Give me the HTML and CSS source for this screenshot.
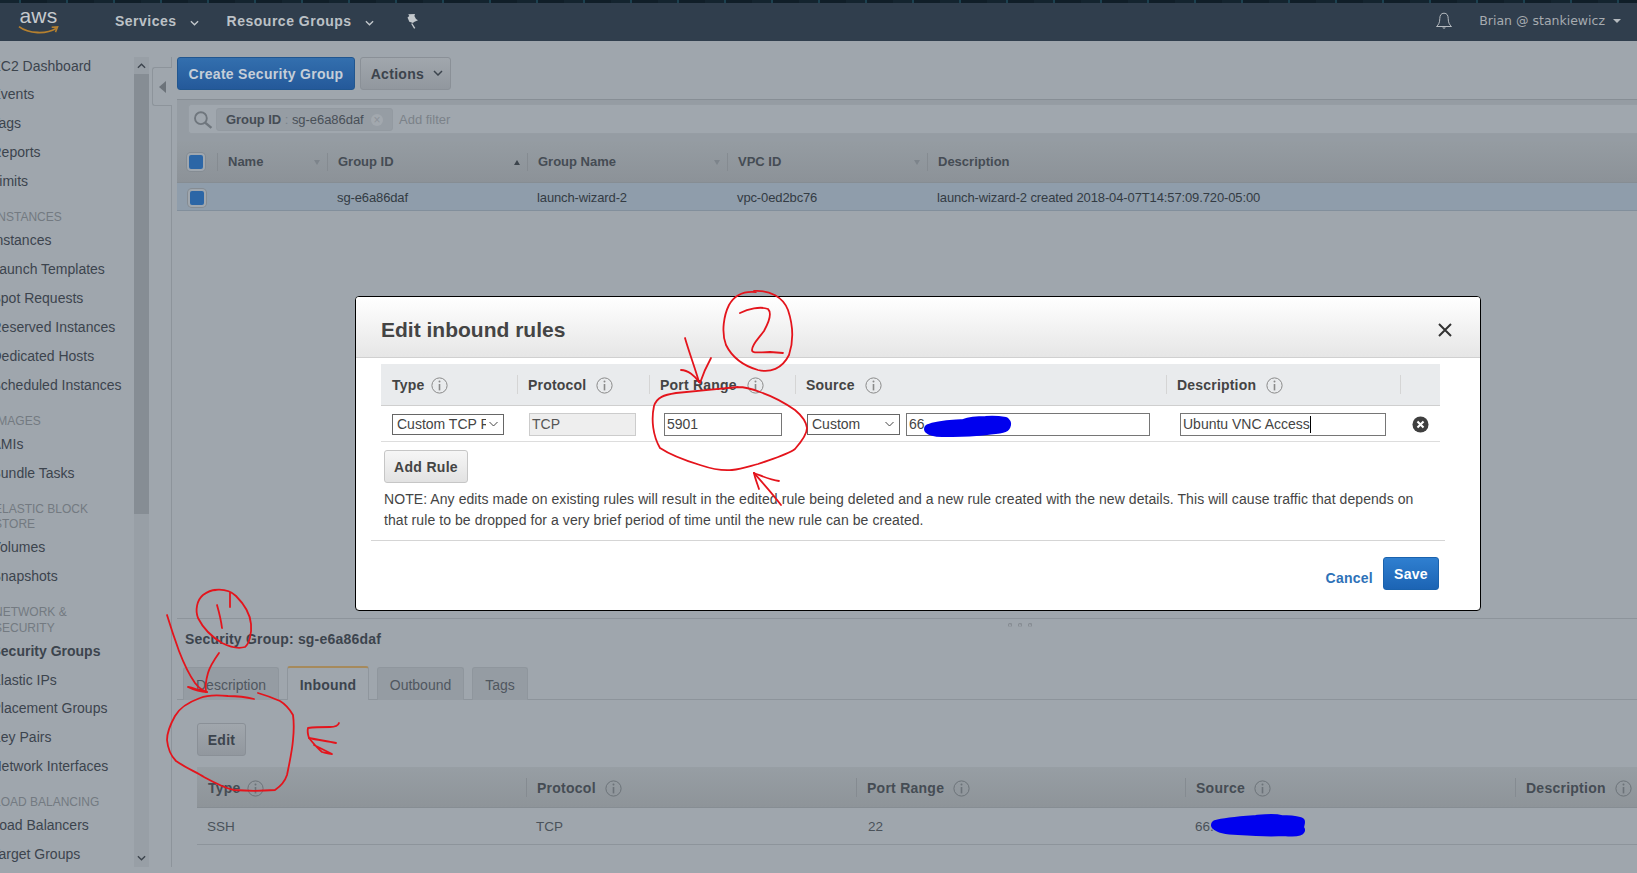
FILE: index.html
```html
<!DOCTYPE html>
<html lang="en">
<head>
<meta charset="utf-8">
<title>Security Groups</title>
<link rel="stylesheet" href="styles.css">
</head>
<body>
<svg class="sprite" width="0" height="0" aria-hidden="true">
  <symbol id="info" viewBox="0 0 17 17">
    <circle cx="8.5" cy="8.5" r="7.6" fill="none" stroke="currentColor" stroke-width="1"/>
    <circle cx="8.5" cy="4.6" r="1" fill="currentColor"/>
    <path d="M8.5 7v6.4" stroke="currentColor" stroke-width="1.6" fill="none"/>
  </symbol>
  <symbol id="chev" viewBox="0 0 10 6">
    <path d="M1 1l4 4 4-4" fill="none" stroke="currentColor" stroke-width="1.5"/>
  </symbol>
</svg>

<header class="topbar">
  <div class="logo">
    <span class="logo-text">aws</span>
    <svg class="logo-smile" viewBox="0 0 42 10"><path d="M1 1.5C11 9 29 9.5 39 3.5" fill="none" stroke="#b5802f" stroke-width="1.8"/><path d="M34.5 2.2L40.5 1.8 38.4 7.2" fill="none" stroke="#b5802f" stroke-width="1.6"/></svg>
  </div>
  <span class="nav-item nav-first">Services</span>
  <svg class="nav-chev"><use href="#chev"/></svg>
  <span class="nav-item nav-second">Resource Groups</span>
  <svg class="nav-chev"><use href="#chev"/></svg>
  <svg class="pin" viewBox="0 0 14 16"><path d="M3.2 1.2L10 .9l-.6 2 1.6 3.2 2 1.2-4 1.6-1 1.2-3.700-1.300L2.500 4.500 4.300 3z" fill="#c3c8cc"/><path d="M6.700 10.500l3 4.800" stroke="#c3c8cc" stroke-width="1.400"/></svg>
  <div class="user">
    <svg class="bell" viewBox="0 0 18 18"><path d="M9 1.200C6 1.200 4.800 3.500 4.800 6.500c0 4-1.300 6.400-3.300 8h15c-2-1.600-3.300-4-3.300-8C13.200 3.500 12 1.200 9 1.200z" fill="none" stroke="#b6bbc0" stroke-width="1"/><path d="M7.200 15.500a2 2 0 0 0 3.600 0z" fill="#b6bbc0"/></svg>
    <span class="user-name">Brian @ stankiewicz</span>
    <span class="caret"></span>
  </div>
</header>

<div class="page">
  <nav class="sidebar">
    <ul class="side-list">
      <li>EC2 Dashboard</li><li>Events</li><li>Tags</li><li>Reports</li><li>Limits</li>
      <li class="side-head">INSTANCES</li>
      <li>Instances</li><li>Launch Templates</li><li>Spot Requests</li><li>Reserved Instances</li><li>Dedicated Hosts</li><li>Scheduled Instances</li>
      <li class="side-head">IMAGES</li>
      <li>AMIs</li><li>Bundle Tasks</li>
      <li class="side-head">ELASTIC BLOCK STORE</li>
      <li>Volumes</li><li>Snapshots</li>
      <li class="side-head">NETWORK &amp; SECURITY</li>
      <li class="side-active">Security Groups</li><li>Elastic IPs</li><li>Placement Groups</li><li>Key Pairs</li><li>Network Interfaces</li>
      <li class="side-head">LOAD BALANCING</li>
      <li>Load Balancers</li><li>Target Groups</li>
    </ul>
  </nav>
  <div class="scroll">
    <svg class="scroll-up"><use href="#chev"/></svg>
    <div class="scroll-thumb"></div>
    <svg class="scroll-down"><use href="#chev"/></svg>
  </div>
  <div class="gutter"><div class="collapse"><span class="collapse-arrow"></span></div></div>

  <main class="main">
    <section class="upper">
      <div class="toolbar">
        <button class="btn btn-primary">Create Security Group</button>
        <button class="btn btn-actions">Actions <svg class="btn-chev"><use href="#chev"/></svg></button>
      </div>
      <div class="filter">
        <div class="filter-box">
          <svg class="search" viewBox="0 0 19 17"><circle cx="7.500" cy="6.800" r="5.600" fill="none" stroke="#6f767d" stroke-width="1.800"/><path d="M11.500 11l6 5" stroke="#6f767d" stroke-width="2.400"/></svg>
          <div class="token"><b>Group ID</b> <span class="token-sep">:</span> sg-e6a86daf<span class="token-x">×</span></div>
          <span class="filter-add">Add filter</span>
        </div>
      </div>
      <div class="grid-top grid-head">
        <div class="th-check"><span class="check"></span></div>
        <div class="th"><div class="th-in"><span>Name</span><i class="sort"></i></div></div>
        <div class="th"><div class="th-in"><span>Group ID</span><i class="sort sort-up"></i></div></div>
        <div class="th"><div class="th-in"><span>Group Name</span><i class="sort"></i></div></div>
        <div class="th"><div class="th-in"><span>VPC ID</span><i class="sort"></i></div></div>
        <div class="th"><div class="th-in"><span>Description</span></div></div>
      </div>
      <div class="grid-top grid-row">
        <div class="td-check"><span class="check"></span></div>
        <div class="td"></div>
        <div class="td">sg-e6a86daf</div>
        <div class="td">launch-wizard-2</div>
        <div class="td">vpc-0ed2bc76</div>
        <div class="td">launch-wizard-2 created 2018-04-07T14:57:09.720-05:00</div>
      </div>
    </section>

    <section class="lower">
      <div class="handle"><i></i><i></i><i></i></div>
      <h2 class="sg-title">Security Group: sg-e6a86daf</h2>
      <div class="tabs">
        <span class="tab tab-desc">Description</span>
        <span class="tab tab-active">Inbound</span>
        <span class="tab tab-out">Outbound</span>
        <span class="tab tab-tags">Tags</span>
      </div>
      <button class="btn btn-edit">Edit</button>
      <div class="rules">
        <div class="grid-bottom rules-head">
          <div class="rh"><span>Type</span><svg class="info"><use href="#info"/></svg></div>
          <div class="rh rh-line"><span>Protocol</span><svg class="info"><use href="#info"/></svg></div>
          <div class="rh rh-line"><span>Port Range</span><svg class="info"><use href="#info"/></svg></div>
          <div class="rh rh-line"><span>Source</span><svg class="info"><use href="#info"/></svg></div>
          <div class="rh rh-line"><span>Description</span><svg class="info"><use href="#info"/></svg></div>
        </div>
        <div class="grid-bottom rules-row">
          <div>SSH</div><div>TCP</div><div class="cell-port">22</div><div>66.</div><div></div>
        </div>
      </div>
    </section>
  </main>
</div>

<div class="modal">
  <div class="modal-head">
    <h1 class="modal-title">Edit inbound rules</h1>
    <svg class="modal-close" viewBox="0 0 14 14"><path d="M1 1l12 12M13 1L1 13" stroke="#333" stroke-width="2" fill="none"/></svg>
  </div>
  <div class="edit-table">
    <div class="grid-edit edit-head">
      <div class="eh"><span>Type</span><svg class="info"><use href="#info"/></svg></div>
      <div class="eh eh-line"><span>Protocol</span><svg class="info"><use href="#info"/></svg></div>
      <div class="eh eh-line"><span>Port Range</span><svg class="info"><use href="#info"/></svg></div>
      <div class="eh eh-line"><span>Source</span><svg class="info"><use href="#info"/></svg></div>
      <div class="eh eh-line"><span>Description</span><svg class="info"><use href="#info"/></svg></div>
      <div class="eh eh-line"></div>
    </div>
    <div class="grid-edit edit-row">
      <div class="ec ec-type"><select class="sel sel-type"><option>Custom TCP Rule</option></select></div>
      <div class="ec ec-proto"><div class="field-static">TCP</div></div>
      <div class="ec ec-port"><input class="field field-port" value="5901"></div>
      <div class="ec ec-source"><select class="sel sel-source"><option>Custom</option></select><input class="field field-source" value="66."></div>
      <div class="ec ec-desc"><div class="field field-desc">Ubuntu VNC Access<span class="text-caret"></span></div></div>
      <div class="ec ec-rm"><svg class="rm" viewBox="0 0 18 18"><circle cx="9" cy="9" r="8.500" fill="#3f3f3f"/><path d="M5.800 5.800l6.400 6.400M12.200 5.800l-6.400 6.400" stroke="#fff" stroke-width="2.200"/></svg></div>
    </div>
  </div>
  <button class="btn btn-add">Add Rule</button>
  <p class="note">NOTE: Any edits made on existing rules will result in the edited rule being deleted and a new rule created with the new details. This will cause traffic that depends on<br>that rule to be dropped for a very brief period of time until the new rule can be created.</p>
  <hr class="modal-rule">
  <div class="modal-foot">
    <a class="cancel">Cancel</a>
    <button class="btn btn-save">Save</button>
  </div>
</div>

<svg class="ink" viewBox="0 0 1637 873" aria-hidden="true">
  <g class="ink-red">
    <path d="M754 291C770 290 783 297 788 310C793 325 794 340 789 355C782 369 770 373 758 370C744 366 732 357 726 345C721 332 724 315 729 305C735 294 746 291 756 292"/>
    <path d="M740 313C748 309 760 306 768 309C772 313 769 322 764 331C759 338 752 344 752 350C752 354 760 352 770 352L783 353"/>
    <path d="M685 338C689 352 695 368 699 382"/>
    <path d="M711 358C706 367 703 374 700 383"/>
    <path d="M681 370C688 370 695 376 699 382"/>
    <path d="M738 387C718 389 695 391 676 393C664 395 657 397 654 406C651 420 653 436 660 448C672 456 687 461 700 465C712 469 722 471 732 470C742 469 750 466 758 464C772 459 787 455 795 449C802 441 807 434 807 428C806 420 801 415 795 410C785 403 772 396 760 392C752 389 745 387 738 387"/>
    <path d="M781 505C772 493 762 482 754 473"/>
    <path d="M754 473C762 476 770 480 779 481"/>
    <path d="M754 473C755 478 757 483 759 489"/>
    <path d="M214 590C222 589 230 590 236 596C244 604 250 612 251 624C252 634 249 644 245 647C238 649 230 647 222 643C212 637 203 628 198 618C195 610 197 600 203 595C207 592 211 590 216 590"/>
    <path d="M217 605C219 612 221 620 222 628"/>
    <path d="M230 593L230 607"/>
    <path d="M167 615C171 628 175 640 179 651C184 664 190 676 195 683C199 688 203 691 207 692"/>
    <path d="M219 653C214 660 210 666 208 673C206 680 205 686 206 692"/>
    <path d="M188 687C194 688 200 691 207 692C200 692 194 690 188 687" stroke-width="3"/>
    <path d="M254 699C246 697 236 696 228 696C218 695 207 695 200 698C189 702 180 707 175 716C170 725 167 732 167 740C168 750 171 756 176 761C186 768 196 772 204 777C215 783 224 788 234 790C247 791 262 791 275 790C281 786 285 781 287 775C289 765 292 752 293 740C294 730 294 722 293 715C289 708 285 704 280 701C273 698 265 695 258 693"/>
    <path d="M339 723C338 726 335 727 330 727C323 727 315 727 308 728C307 732 308 735 309 738C318 740 327 741 336 743"/>
    <path d="M309 738C313 743 317 748 322 752C326 753 329 754 332 754C326 751 320 748 314 745"/>
  </g>
  <g class="ink-blue">
    <path d="M929 429C938 425 952 425 964 424C972 421 980 421 986 421C994 420 1000 421 1005 422C1007 424 1006 427 1002 428C994 430 984 430 976 431C964 432 950 432 942 432C936 432 931 431 929 429"/>
    <path d="M1216 825C1226 822 1242 821 1256 820C1266 819 1274 818 1281 820C1289 820 1296 821 1300 822C1300 825 1298 827 1300 830C1299 832 1292 832 1284 831C1270 832 1252 831 1238 830C1227 830 1219 828 1216 825"/>
  </g>
</svg>
</body>
</html>
```

FILE: styles.css
```css
* { box-sizing: border-box; }
html, body { margin: 0; height: 100%; }
body {
  position: relative;
  width: 1637px;
  height: 873px;
  overflow: hidden;
  background: #9fa6ad;
  color: #3c444d;
  font: 14px/20px "Liberation Sans", Arial, sans-serif;
  display: flex;
  flex-direction: column;
}
.sprite { position: absolute; }
button { font-family: inherit; cursor: default; }

/* top bar */
.topbar {
  flex: none;
  height: 41px;
  display: flex;
  align-items: center;
  padding: 1px 0 0 18px;
  color: #bcc1c6;
  background:
    repeating-linear-gradient(90deg, #14242f 0 19px, #1c4150 19px 21px, #101e28 21px 47px) top / 100% 3px no-repeat,
    #303e4d;
}
.logo { position: relative; width: 41px; height: 27px; flex: none; }
.logo-text { display: block; font-size: 21px; line-height: 20px; letter-spacing: .3px; color: #c6cacd; text-align: center; margin-top: -2px; }
.logo-smile { position: absolute; left: 0; bottom: 0; width: 41px; height: 10px; }
.nav-item { font-weight: bold; font-size: 14px; letter-spacing: .5px; }
.nav-first { margin-left: 56px; }
.nav-second { margin-left: 28px; }
.nav-chev { width: 9px; height: 6px; margin-left: 13px; margin-top: 3px; color: #c3c8cc; }
.pin { width: 14px; height: 16px; margin-left: 31px; }
.user { margin-left: auto; display: flex; align-items: center; padding-right: 16px; }
.bell { width: 18px; height: 18px; }
.user-name { margin-left: 26px; font: 12.500px/20px "DejaVu Sans", sans-serif; color: #a6abb0; }
.caret { margin-left: 8px; border: 4px solid transparent; border-top: 4px solid #b6bbc0; border-bottom: 0; }

/* page shell */
.page { flex: 1; display: flex; min-height: 0; }
.sidebar { flex: none; width: 134px; overflow: hidden; padding-top: 10.500px; }
.side-list { list-style: none; margin: 0 0 0 -8.500px; padding: 0; width: 160px; }
.side-list li { height: 28.950px; line-height: 29px; white-space: nowrap; }
.side-list .side-head {
  height: auto;
  max-width: 115px;
  white-space: normal;
  margin: 14px 0 .5px 2.500px;
  font-size: 12px;
  line-height: 15.500px;
  color: #737a81;
}
.side-list .side-active { font-weight: bold; }

.scroll {
  flex: none;
  width: 15px;
  height: 810px;
  margin-top: 16px;
  background: #989fa6;
  display: flex;
  flex-direction: column;
  align-items: center;
  color: #3c444d;
}
.scroll-up, .scroll-down { width: 9px; height: 6px; flex: none; }
.scroll-up { transform: rotate(180deg); margin: 6px 0 5px; }
.scroll-down { margin-top: auto; margin-bottom: 6px; }
.scroll-thumb { width: 15px; height: 440px; background: #868d94; flex: none; }
.gutter { flex: none; position: relative; width: 23px; height: 810px; margin-top: 16px; border-right: 1px solid #8d949b; }
.collapse {
  position: absolute;
  left: 3px;
  top: 10px;
  width: 20px;
  height: 39px;
  border: 1px solid #8d949b;
  border-right: 0;
  border-radius: 3px 0 0 3px;
  background: #9fa6ad;
  display: flex;
  align-items: center;
  justify-content: center;
}
.collapse-arrow { border: 6px solid transparent; border-right: 7px solid #6c737a; border-left: 0; }

.main { flex: none; width: 1460px; margin-left: 5px; display: flex; flex-direction: column; }
.upper { height: 578px; flex: none; padding-top: 16px; border-bottom: 1px solid #8d949b; }

/* buttons */
.btn {
  height: 33px;
  border-radius: 3px;
  font-size: 14px;
  font-weight: bold;
  letter-spacing: .3px;
  padding: 0;
  border: 1px solid #8a9097;
  color: #3c444d;
  background: linear-gradient(#a1a7ad, #91979e);
}
.toolbar { display: flex; gap: 5px; height: 33px; margin-bottom: 9px; }
.btn-primary {
  width: 178px;
  color: #c5ced8;
  border-color: #21568f;
  background: linear-gradient(#336fae, #24599a);
}
.btn-actions { width: 91px; padding-left: 3px; }
.btn-chev { width: 10px; height: 6px; margin-left: 5px; vertical-align: 3px; }

/* filter */
.filter { height: 42px; border-top: 1px solid #878e95; background: #959ca3; padding: 4px 0 7px 11px; }
.filter-box {
  height: 30px;
  display: flex;
  align-items: center;
  background: #a0a7ae;
  border: 1px solid #969da4;
  border-right: 0;
  border-radius: 3px 0 0 3px;
  padding: 1px 0 0 4px;
}
.search { width: 20px; height: 18px; flex: none; }
.token {
  margin-left: 3px;
  width: 177px;
  height: 23px;
  border: 1px solid #939aa1;
  border-radius: 3px;
  background: #969da4;
  padding-left: 9px;
  font-size: 13px;
  line-height: 21px;
  letter-spacing: -.05px;
  color: #484f57;
  position: relative;
}
.token b { color: #454c54; }
.token-sep { color: #7b8289; }
.token-x {
  position: absolute;
  right: 9px;
  top: 5px;
  width: 12px;
  height: 12px;
  border-radius: 50%;
  background: #a2a8ae;
  color: #8c9299;
  font-size: 12px;
  line-height: 12px;
  text-align: center;
}
.filter-add { margin-left: 6px; font-size: 13px; color: #7b8289; }

/* top grid */
.grid-top { display: grid; grid-template-columns: 40px 110px 200px 200px 200px 1fr; }
.grid-head { height: 42px; background: linear-gradient(#959ca2, #8c9298); border-bottom: 1px solid #868d93; font-size: 13px; font-weight: bold; color: #454c54; }
.grid-row { height: 28px; background: #8f9dab; border-bottom: 1px solid #828f9c; font-size: 13px; line-height: 29px; letter-spacing: -.12px; color: #333b43; }
.th-check, .td-check { display: flex; align-items: center; justify-content: center; padding-right: 2px; }
.td-check { padding-right: 0; }
.check { display: block; width: 18px; height: 18px; border: 2px solid #a0a7ae; box-shadow: 0 0 0 1px #858c93; border-radius: 4px; background: #2c66a6; }
.th { display: flex; align-items: center; }
.th-in {
  flex: 1;
  height: 18px;
  line-height: 20px;
  border-left: 1px solid #858b91;
  padding: 1px 7px 0 10px;
  display: flex;
  justify-content: space-between;
  align-items: center;
}
.sort { border: 3.500px solid transparent; border-top: 5px solid #7d848b; border-bottom: 0; }
.sort-up { border-top: 0; border-bottom: 5px solid #3c444c; }
.td { padding-left: 10px; white-space: nowrap; }

/* lower pane */
.handle { height: 10px; display: flex; gap: 6px; padding: 4px 0 0 831px; }
.handle i { width: 4px; height: 4px; border: 1px solid #84898f; border-bottom: 0; border-radius: 50%; }
.sg-title { margin: 0 0 18px 8px; font-size: 14px; line-height: 20px; letter-spacing: .2px; font-weight: bold; color: #3c444d; }
.tabs { display: flex; height: 33px; padding-left: 6px; gap: 8px; border-bottom: 1px solid #8d949b; }
.tab {
  height: 33px;
  border: 1px solid #8f969d;
  border-bottom: 0;
  border-radius: 3px 3px 0 0;
  background: #959ca3;
  color: #50575f;
  line-height: 34px;
  text-align: center;
}
.tab-desc { width: 96px; }
.tab-active { width: 82px; height: 34px; margin-top: -1px; background: #9fa6ad; border-top: 2px solid #a68a5c; font-weight: bold; color: #3c444d; letter-spacing: .2px; position: relative; }
.tab-out { width: 87px; }
.tab-tags { width: 56px; }
.btn-edit { display: block; width: 49px; margin: 23px 0 11px 20px; }
.rules { margin-left: 20px; }
.grid-bottom { display: grid; grid-template-columns: 329px 330px 329px 330px 1fr; }
.rules-head { height: 41px; background: linear-gradient(#979ea4, #8e9499); border-bottom: 1px solid #868d93; font-weight: bold; letter-spacing: .25px; color: #454c54; }
.rules-row { height: 37px; line-height: 38px; font-size: 13.500px; border-bottom: 1px solid #8d949b; color: #4a525a; }
.rules-row > div { padding-left: 10px; }
.rules-row > .cell-port { padding-left: 12px; }
.rh { display: flex; align-items: center; padding: 2px 0 0 11px; position: relative; }
.rh-line::before, .eh-line::before { content: ""; position: absolute; left: 0; top: 11px; height: 19px; border-left: 1px solid #858b91; }
.info { width: 17px; height: 17px; margin-left: 9px; color: #6c7379; flex: none; }
.rh:first-child .info { margin-left: 6px; }

/* modal */
.modal {
  position: absolute;
  left: 355px;
  top: 296px;
  width: 1126px;
  height: 315px;
  background: #fff;
  border: 1px solid #000;
  border-radius: 4px;
  color: #444;
  display: flex;
  flex-direction: column;
}
.modal-head {
  flex: none;
  height: 61px;
  display: flex;
  align-items: center;
  justify-content: space-between;
  padding: 6px 28px 0 25px;
  background: linear-gradient(#fff, #e6e6e6);
  border-bottom: 1px solid #d0d0d0;
  border-radius: 3px 3px 0 0;
}
.modal-title { margin: 0; font-size: 21px; line-height: 24px; font-weight: bold; color: #444; }
.modal-close { width: 14px; height: 14px; }
.edit-table { margin: 6px 0 0 25px; width: 1059px; flex: none; }
.grid-edit { display: grid; grid-template-columns: 136px 132px 146px 371px 234px 40px; }
.edit-head { height: 42px; background: #e9ebed; border-bottom: 1px solid #cfcfcf; font-weight: bold; letter-spacing: .2px; }
.eh { display: flex; align-items: center; padding: 1px 0 0 11px; position: relative; }
.eh .info { color: #8a8a8a; margin-left: 10px; }
.eh:first-child .info { margin-left: 7px; }
.eh-line::before { border-left-color: #d5d5d5; }
.edit-row { height: 36px; border-bottom: 1px solid #ddd; }
.ec { display: flex; align-items: center; padding-top: 1px; }
.ec-type { padding-left: 11px; }
.ec-proto { padding-left: 12px; }
.ec-port { padding-left: 15px; }
.ec-source { padding-left: 12px; gap: 6px; }
.ec-desc { padding-left: 14px; }
.ec-rm { justify-content: center; }
.sel {
  height: 21px;
  font: 14px "Liberation Sans", Arial, sans-serif;
  color: #444;
  border: 1px solid #666;
  border-radius: 0;
  padding: 0 17px 0 4px;
  appearance: none;
  background: #fff url("data:image/svg+xml,%3Csvg xmlns='http://www.w3.org/2000/svg' width='9' height='6'%3E%3Cpath d='M.5 1l4 4 4-4' fill='none' stroke='%23444' stroke-width='1'/%3E%3C/svg%3E") no-repeat right 5px center;
}
.sel-type { width: 112px; }
.sel-source { width: 93px; }
.field-static { width: 107px; height: 23px; border: 1px solid #ccc; background: #eee; color: #555; line-height: 21px; padding-left: 2px; }
.field { height: 23px; border: 1px solid #767676; border-radius: 0; padding: 0 2px; font: 14px/21px "Liberation Sans", Arial, sans-serif; color: #444; background: #fff; outline: 0; }
.field-port { width: 118px; }
.field-source { width: 244px; }
.field-desc { width: 206px; }
.text-caret { display: inline-block; width: 1px; height: 17px; background: #000; vertical-align: -4px; }
.rm { width: 17px; height: 17px; }
.btn-add { width: 84px; flex: none; margin: 8px 0 0 28px; color: #444; border-color: #c6c6c6; background: linear-gradient(#f6f6f6, #e2e2e2); }
.note { margin: 5.500px 0 0 28px; font-size: 14px; line-height: 21px; letter-spacing: .072px; color: #444; white-space: nowrap; }
.modal-rule { flex: none; width: 1074px; margin: 9.500px 0 0 15px; border: 0; border-top: 1px solid #d5d5d5; }
.modal-foot { flex: none; display: flex; justify-content: flex-end; align-items: flex-end; gap: 10px; margin: 16px 41px 0 0; }
.cancel { font-weight: bold; color: #2e72b8; letter-spacing: .25px; margin-bottom: 2px; }
.btn-save { width: 56px; color: #fff; border-color: #1a62ad; background: linear-gradient(#2f7fd0, #1c64b4); }

/* hand-drawn annotations */
.ink { position: absolute; left: 0; top: 0; width: 1637px; height: 873px; pointer-events: none; }
.ink path { fill: none; stroke-linecap: round; stroke-linejoin: round; }
.ink-red path { stroke: #e4141c; stroke-width: 1.800; }
.ink-blue path { stroke: #0000ee; stroke-width: 10; fill: #0000ee; }
```
